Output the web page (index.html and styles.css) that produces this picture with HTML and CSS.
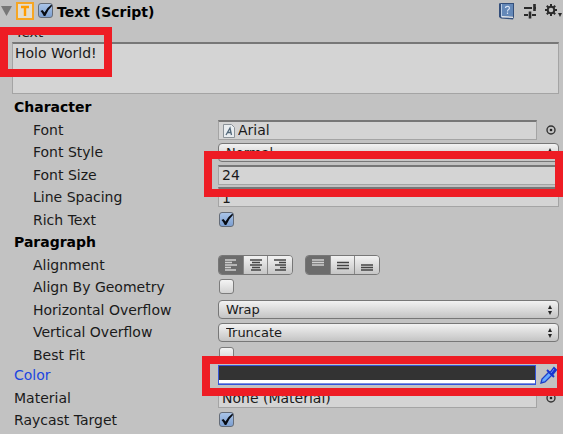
FILE: index.html
```
<!DOCTYPE html>
<html lang="en">
<head>
<meta charset="utf-8">
<title>Text (Script)</title>
<link rel="stylesheet" href="styles.css">
</head>
<body>
<svg class="defs" aria-hidden="true">
  <symbol id="tick" viewBox="0 0 16 16"><path d="M2.500 8 4.500 7 6.500 9.500Q9 4.500 13.500 1.500L14 3Q10 6.500 7.300 13H5.800Q4.500 10 2.500 8z" fill="#080c14"/></symbol>
  <symbol id="arrows" viewBox="0 0 6 10"><path d="M3 0 5 4H1zM3 10 1 6h4z" fill="#222"/></symbol>
  <symbol id="picker" viewBox="0 0 10 10"><circle cx="5" cy="5" r="4" fill="none" stroke="#333" stroke-width="1.4"/><circle cx="5" cy="5" r="1.3" fill="#222"/></symbol>
</svg>
<main class="inspector">
  <header class="header">
    <svg class="fold" viewBox="0 0 12 10"><path d="M1 0h11L6.500 10z" fill="#777"/></svg>
    <svg class="type-icon" viewBox="0 0 18 18"><rect x="1" y="1" width="16" height="16" fill="#e2dccf" stroke="#f6a623" stroke-width="2"/><path d="M5 5h8M9 5v9" fill="none" stroke="#ff9c00" stroke-width="2.4"/></svg>
    <span class="check"><input type="checkbox" id="enabled" checked><svg><use href="#tick"/></svg></span>
    <label class="title" for="enabled">Text (Script)</label>
    <button class="tool" aria-label="Help"><svg width="17" height="18" viewBox="0 0 17 18"><path d="M1 1.500 3 1h13v14l-1 2.500-12-1-2-1.500z" fill="#344f7b"/><path d="M4 2h11v12H4z" fill="#6488b8"/><path d="M3.500 15.500 15 16v-1.500L4 14z" fill="#e4e9ef"/><path d="M3.500 2v13" stroke="#b9cce4"/><path d="M7.500 6q0-1.700 2-1.700t2 1.700q0 1-1 1.500T9.500 9.500M9.500 10.500v1.500" fill="none" stroke="#d6e2f4" stroke-width="1.200"/></svg></button>
    <button class="tool" aria-label="Presets"><svg width="14" height="16" viewBox="0 0 14 16"><path d="M1 5h8M12 5h1M1 12h4M9 12h4" stroke="#2a2a2a" stroke-width="2"/><path d="M11.500 1v7M7 8.500v7" stroke="#2a2a2a" stroke-width="2.600"/></svg></button>
    <button class="tool" aria-label="Options"><svg width="17" height="14" viewBox="0 0 17 14"><circle cx="6" cy="6" r="3.300" fill="none" stroke="#2a2a2a" stroke-width="2"/><path d="M6 0v2.500M6 9.500V12M0 6h2.500M9.500 6H12M1.800 1.800l1.700 1.700M8.500 8.500l1.700 1.700M10.200 1.800 8.500 3.500M3.500 8.500l-1.700 1.700" stroke="#2a2a2a" stroke-width="2"/><path d="M13 9h4l-2 4z" fill="#2a2a2a"/></svg></button>
  </header>

  <section class="text-block">
    <label for="text">Text</label>
    <textarea id="text" class="field">Holo World!</textarea>
    <span class="highlight highlight-text"></span>
  </section>

  <section class="group">
    <h2 class="row">Character</h2>
    <div class="row"><label for="font">Font</label>
      <div class="object"><svg class="asset" viewBox="0 0 12 14"><path d="M.500.500h8l3 3v10H.500z" fill="#e9edf0" stroke="#8b9298"/><path d="M3 11 7 4l1.500 7M4.500 8.500H8" fill="none" stroke="#52687a" stroke-width="1.300"/></svg><input id="font" class="field with-asset" value="Arial"><svg class="picker"><use href="#picker"/></svg></div></div>
    <div class="row"><label for="style">Font Style</label>
      <div class="popup"><select id="style"><option>Normal</option></select><svg><use href="#arrows"/></svg></div></div>
    <div class="row"><label for="size">Font Size</label><input id="size" class="field" value="24"><span class="highlight highlight-size"></span></div>
    <div class="row"><label for="spacing">Line Spacing</label><input id="spacing" class="field" value="1"></div>
    <div class="row"><label for="rich">Rich Text</label><span class="check"><input type="checkbox" id="rich" checked><svg><use href="#tick"/></svg></span></div>
  </section>

  <section class="group">
    <h2 class="row">Paragraph</h2>
    <div class="row"><span>Alignment</span>
      <div class="aligns">
        <div class="segments">
          <button class="on" aria-label="Left"><svg viewBox="0 0 12 12"><path d="M0 1h11M0 3.500h7M0 6h12M0 8.500h6M0 11h11"/></svg></button>
          <button aria-label="Center"><svg viewBox="0 0 12 12"><path d="M0 1h12M2 3.500h8M0 6h12M2 8.500h8M1 11h10"/></svg></button>
          <button aria-label="Right"><svg viewBox="0 0 12 12"><path d="M0 1h12M5 3.500h7M1 6h11M6 8.500h6M1 11h11"/></svg></button>
        </div>
        <div class="segments">
          <button class="on" aria-label="Top"><svg viewBox="0 0 12 12"><path d="M0 1h12M0 3.500h12M0 6h12"/></svg></button>
          <button aria-label="Middle"><svg viewBox="0 0 12 12"><path d="M0 3.500h12M0 6.500h12M0 9.500h12"/></svg></button>
          <button aria-label="Bottom"><svg viewBox="0 0 12 12"><path d="M0 6h12M0 8.500h12M0 11h12"/></svg></button>
        </div>
      </div></div>
    <div class="row"><label for="geometry">Align By Geometry</label><span class="check"><input type="checkbox" id="geometry"></span></div>
    <div class="row"><label for="horizontal">Horizontal Overflow</label>
      <div class="popup"><select id="horizontal"><option>Wrap</option></select><svg><use href="#arrows"/></svg></div></div>
    <div class="row"><label for="vertical">Vertical Overflow</label>
      <div class="popup"><select id="vertical"><option>Truncate</option></select><svg><use href="#arrows"/></svg></div></div>
    <div class="row"><label for="fit">Best Fit</label><span class="check"><input type="checkbox" id="fit"></span></div>
  </section>

  <section class="group base">
    <div class="row"><label class="active" for="color">Color</label>
      <div class="object"><button id="color" class="swatch"></button><svg class="dropper" viewBox="0 0 18 20"><path d="M2 18 3 14 10 7l3 3-7 7z" fill="#67a9ff" stroke="#1d3fc8" stroke-width="1.300"/><path d="m8 5 7 7M11 8l4-5 2 2-4 5z" fill="#1834d0" stroke="#1834d0" stroke-width="2"/><path d="m12 8 3-4" stroke="#6f8cf5"/></svg></div>
      <span class="highlight highlight-color"></span></div>
    <div class="row"><label for="material">Material</label>
      <div class="object"><input id="material" class="field" value="None (Material)"><svg class="picker"><use href="#picker"/></svg></div></div>
    <div class="row"><label for="raycast">Raycast Target</label><span class="check"><input type="checkbox" id="raycast" checked><svg><use href="#tick"/></svg></span></div>
  </section>
</main>
</body>
</html>
```
FILE: styles.css
```
* { box-sizing: border-box; }
body {
  margin: 0;
  background: #c2c2c2;
  color: #1a1a1a;
  font: 14px/18px "DejaVu Sans", sans-serif;
}
input, select, textarea, button { margin: 0; font: inherit; color: inherit; }
svg { display: block; flex: none; }
.defs { position: absolute; width: 0; height: 0; }
.inspector { overflow: hidden; }

.header { display: flex; align-items: center; height: 22px; padding-right: 1px; }
.fold { width: 12px; height: 10px; margin-right: 4px; }
.type-icon { width: 18px; height: 18px; margin-right: 3px; }
.title { flex: 1; margin-left: 3px; padding-top: 2px; font-weight: bold; color: #000; }
.tool { padding: 0; border: 0; background: none; margin-left: 8px; }

.text-block { position: relative; padding: 0 4px 2px 12px; }
.text-block label { display: block; height: 20px; padding-left: 3px; line-height: 20px; }
.field {
  display: block;
  width: 100%;
  min-width: 0;
  height: 20px;
  padding: 0 3px;
  border: 1px solid #a4a4a4;
  border-top: 2px solid #777;
  border-radius: 0;
  background: #d4d4d4;
  outline: 0;
}
textarea.field { height: 52px; resize: none; padding: 0 2px; }

.group { padding-right: 4px; }
.row {
  position: relative;
  display: grid;
  grid-template-columns: 185px minmax(0, 1fr);
  align-items: center;
  height: 22px;
  margin: 0;
  padding-left: 33px;
}
.row:nth-child(even) { height: 23px; }
h2.row, .base .row { padding-left: 14px; }
h2.row { font-size: 14px; font-weight: bold; color: #000; }
.base { margin-top: -2px; }
.base .row { grid-template-columns: 204px minmax(0, 1fr); }
.active { color: #1c45e0; }

.check { position: relative; display: block; width: 16px; height: 16px; margin-left: 1px; }
.check input {
  appearance: none;
  display: block;
  width: 15px;
  height: 15px;
  border: 1px solid #7c7c7c;
  border-radius: 3px;
  background: linear-gradient(#f4f4f4, #d2d2d2);
}
.check input:checked { border-color: #646c78; background: linear-gradient(#a9c4e8, #7d9fd0); }
.check svg { position: absolute; inset: 0; width: 16px; height: 16px; pointer-events: none; }

.object { position: relative; display: flex; align-items: center; }
.asset { position: absolute; left: 5px; top: 4px; width: 12px; height: 14px; }
.with-asset { padding-left: 19px; }
.picker { width: 10px; height: 10px; margin: 0 3px 0 9px; }
.swatch {
  flex: 1;
  height: 20px;
  padding: 0;
  border: 1px solid #3454d8;
  background: linear-gradient(#333 14px, #fff 14px, #fff 17px, #7d8fe0 17px);
}
.dropper { width: 18px; height: 20px; margin: 0 2px 0 3px; }

.popup { position: relative; }
.popup select {
  appearance: none;
  display: block;
  width: 100%;
  height: 19px;
  padding: 0 7px;
  border: 1px solid #777;
  border-radius: 4px;
  background: linear-gradient(#f2f2f2, #c4c4c4);
  font-size: 13px;
  line-height: 17px;
}
.popup svg { position: absolute; right: 6px; top: 5px; width: 6px; height: 10px; pointer-events: none; }

.aligns { display: flex; gap: 12px; }
.segments { display: flex; width: 75px; height: 20px; border: 1px solid #777; border-radius: 4px; overflow: hidden; }
.segments button {
  flex: 1;
  display: grid;
  place-items: center;
  padding: 0;
  border: 0;
  background: linear-gradient(#f2f2f2, #c6c6c6);
}
.segments button + button { border-left: 1px solid #888; }
.segments button.on { background: #6c6c6c; }
.segments svg { width: 12px; height: 12px; stroke: #444; stroke-width: 1.300; }
.segments .on svg { stroke: #d0d0d0; }

.highlight { position: absolute; z-index: 1; border: 8px solid #ee1c24; pointer-events: none; }
.highlight-text { left: 0; top: 5px; width: 112px; height: 50px; }
.highlight-size { left: 204px; right: -4px; top: -12px; height: 46px; }
.highlight-color { left: 202px; right: -6px; top: -8px; height: 40px; }
```
